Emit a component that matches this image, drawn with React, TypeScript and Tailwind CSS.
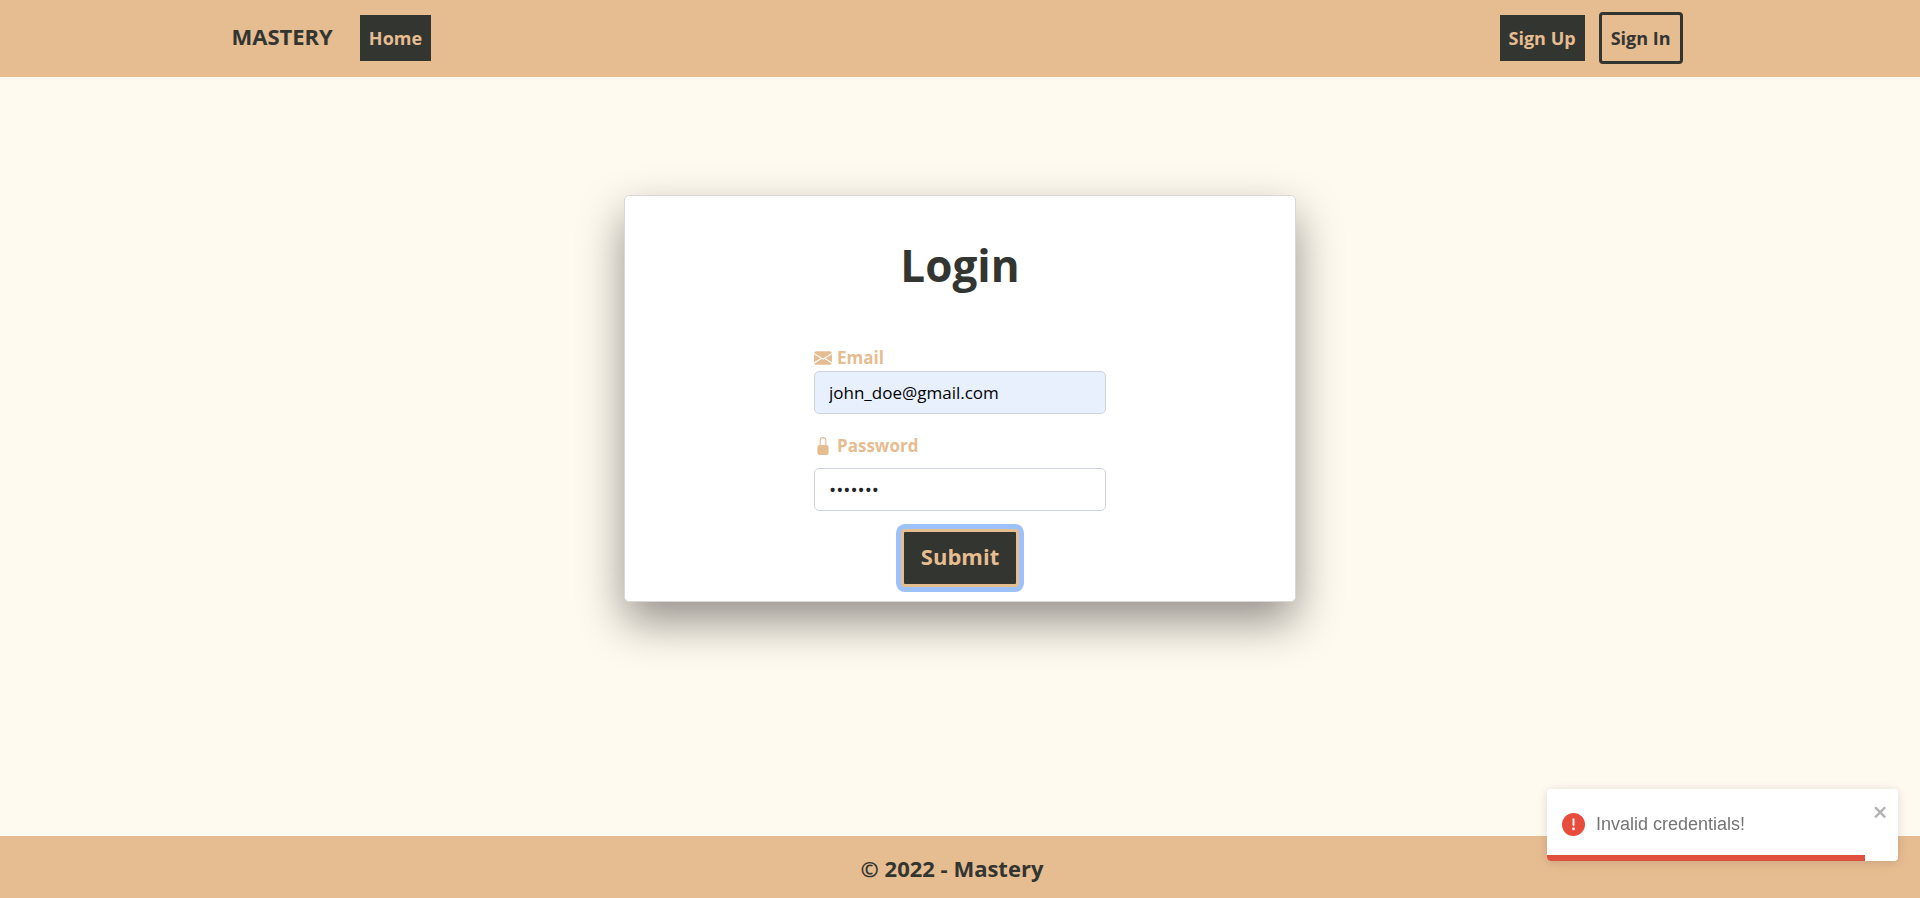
import { useState } from 'react';

function EnvelopeIcon() {
  return (
    <svg viewBox="0 0 16 16" fill="currentColor" className="size-[18px] shrink-0" aria-hidden="true">
      <path d="M.05 3.555A2 2 0 0 1 2 2h12a2 2 0 0 1 1.95 1.555L8 8.414.05 3.555ZM0 4.697v7.104l5.803-3.558L0 4.697ZM6.761 8.83l-6.57 4.027A2 2 0 0 0 2 14h12a2 2 0 0 0 1.808-1.144l-6.57-4.027L8 9.586l-1.239-.757Zm3.436-.586L16 11.801V4.697l-5.803 3.546Z" />
    </svg>
  );
}

function LockIcon() {
  return (
    <svg viewBox="0 0 16 16" fill="currentColor" className="size-[18px] shrink-0" aria-hidden="true">
      <path d="M8 1a2 2 0 0 1 2 2v4H6V3a2 2 0 0 1 2-2zm3 6V3a3 3 0 0 0-6 0v4a2 2 0 0 0-2 2v5a2 2 0 0 0 2 2h6a2 2 0 0 0 2-2V9a2 2 0 0 0-2-2z" />
    </svg>
  );
}

function Header() {
  return (
    <header className="bg-[#e6bc91]">
      <nav className="mx-auto flex h-[77px] w-full max-w-[1485px] items-center pr-5 pb-px pl-3.5 text-lg">
        <a href="#" className="pb-1 text-[22px] font-bold leading-8">MASTERY</a>
        <a href="#" className="ml-[27px] bg-[#333531] px-[9px] py-2.5 leading-[26px] font-bold text-[#e6bc91]">Home</a>
        <div className="ml-auto flex items-center gap-3.5">
          <a href="#" className="bg-[#333531] px-[9px] py-2.5 leading-[26px] font-bold text-[#e6bc91]">Sign Up</a>
          <a href="#" className="rounded-sm border-3 border-[#333531] px-[9px] py-2.5 leading-[26px] font-bold">Sign In</a>
        </div>
      </nav>
    </header>
  );
}

function LoginCard() {
  const [email, setEmail] = useState('john_doe@gmail.com');
  const [password, setPassword] = useState('secret1');
  return (
    <section className="flex w-full max-w-[672px] flex-col items-center rounded-[5px] border border-[#d9dad6] bg-white pt-[42px] pb-3.5 shadow-[0_20px_45px_rgba(0,0,0,0.42)]">
      <h1 className="text-[44px] leading-[54px] font-bold">Login</h1>
      <form className="mt-[52px] flex w-[292px] flex-col" onSubmit={(e) => e.preventDefault()}>
        <label htmlFor="email" className="flex items-center gap-[5px] leading-[27px] font-bold text-[#e6bc91]">
          <EnvelopeIcon />
          Email
        </label>
        <input
          id="email"
          type="email"
          value={email}
          onChange={(e) => setEmail(e.target.value)}
          className="h-[43px] rounded-[5px] border border-[#ced4da] bg-[#e8f0fe] px-3.5 text-black outline-none"
        />
        <label htmlFor="password" className="mt-[18px] flex items-center gap-[5px] leading-[27px] font-bold text-[#e6bc91]">
          <LockIcon />
          Password
        </label>
        <input
          id="password"
          type="password"
          value={password}
          onChange={(e) => setPassword(e.target.value)}
          className="mt-[9px] h-[43px] rounded-[5px] border border-[#ced4da] bg-white px-3.5 text-[19px] text-[#212529] outline-none"
        />
        <button
          type="submit"
          className="mt-[18px] self-center rounded-[4px] border-3 border-[#e6bc91] bg-[#333531] px-[17px] pt-2 pb-3 text-[22px] leading-8 font-bold text-[#e6bc91] shadow-[0_0_0_5px_#9dc1fb]"
        >
          Submit
        </button>
      </form>
    </section>
  );
}

function Toast() {
  return (
    <div
      role="alert"
      className="fixed right-[22px] bottom-[37px] flex h-[72px] w-[351px] items-start overflow-hidden rounded-[4px] bg-white font-['Liberation_Sans',sans-serif] text-lg shadow-[0_1px_10px_rgba(0,0,0,0.1),0_2px_15px_rgba(0,0,0,0.05)]"
    >
      <div className="flex h-full flex-1 items-center gap-[11px] pb-0.5 pl-[15px]">
        <svg viewBox="0 0 24 24" fill="#e74c3c" className="size-[23px]" aria-hidden="true">
          <path d="M11.983 0a12.206 12.206 0 00-8.51 3.653A11.8 11.8 0 000 12.207 11.779 11.779 0 0011.8 24h.214A12.111 12.111 0 0024 11.791 11.766 11.766 0 0011.983 0zM10.5 16.542a1.476 1.476 0 011.449-1.53h.027a1.527 1.527 0 011.523 1.47 1.475 1.475 0 01-1.449 1.53h-.027a1.529 1.529 0 01-1.523-1.47zM11 12.5v-6a1 1 0 012 0v6a1 1 0 11-2 0z" />
        </svg>
        <p className="leading-6 text-[#757575]">Invalid credentials!</p>
      </div>
      <button type="button" aria-label="Close" className="mt-3.5 mr-[9px] text-[#b3b3b3]">
        <svg viewBox="0 0 14 16" fill="currentColor" className="h-[18px] w-4" aria-hidden="true">
          <path fillRule="evenodd" d="M7.71 8.23l3.75 3.75-1.48 1.48-3.75-3.75-3.75 3.75L1 11.98l3.75-3.75L1 4.48 2.48 3l3.75 3.75L9.98 3l1.48 1.48-3.75 3.75z" />
        </svg>
      </button>
      <div className="absolute bottom-0 left-0 h-1.5 w-[318px] bg-[#e0503f]" />
    </div>
  );
}

export default function App() {
  return (
    <div className="flex min-h-screen flex-col bg-[#fffaef] font-['Open_Sans','Noto_Sans',sans-serif] text-[17px] text-[#333531]">
      <Header />
      <main className="flex flex-1 items-start justify-center pt-[118px]">
        <LoginCard />
      </main>
      <footer className="bg-[#e6bc91] pt-4 pr-4 pb-3.5 text-center text-[22px] leading-8 font-bold">© 2022 - Mastery</footer>
      <Toast />
    </div>
  );
}
